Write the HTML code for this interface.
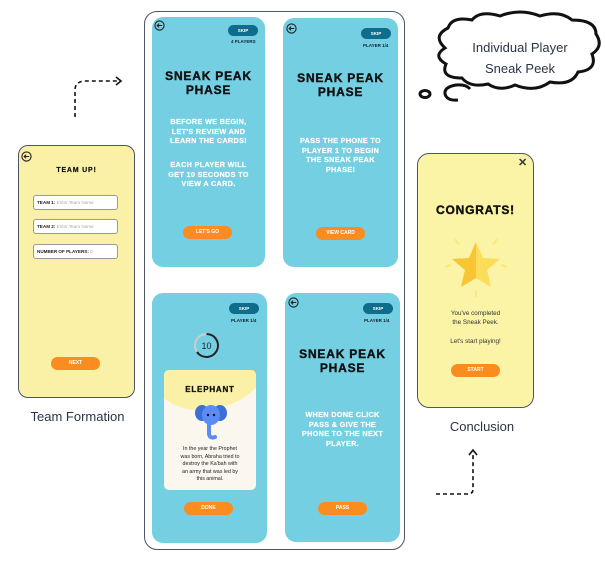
<!DOCTYPE html>
<html><head><meta charset="utf-8"><style>
*{margin:0;padding:0;box-sizing:border-box}
body{width:605px;height:565px;background:#fff;position:relative;overflow:hidden;font-family:"Liberation Sans",sans-serif}
.a{position:absolute}
.p{position:absolute;background:#74cfe2;border-radius:11px}
.t{position:absolute;left:0;right:0;text-align:center;font-weight:bold;color:#111;font-size:12px;line-height:14px;letter-spacing:0.8px;-webkit-text-stroke:0.4px #111}
.w{position:absolute;left:4px;right:4px;text-align:center;font-weight:bold;color:#fff;font-size:7.3px;line-height:9.6px;letter-spacing:0.3px;-webkit-text-stroke:0.2px #fff}
.skip{position:absolute;width:30px;height:11px;border-radius:6px;background:#0e6d8c;color:#fff;font-size:4.5px;font-weight:bold;text-align:center;line-height:11px}
.pl{position:absolute;font-size:4.5px;font-weight:bold;color:#123;}
.btn{position:absolute;height:13px;border-radius:7px;background:#fb8c1f;color:#fff;font-size:5px;font-weight:bold;text-align:center;line-height:13px}
.back{position:absolute;width:11px;height:11px}
.lbl{position:absolute;font-size:13px;color:#2b3445;text-align:center}
.inp{position:absolute;left:14px;width:85px;height:15px;background:#fff;border:1px solid #999;border-radius:3px;font-size:4.6px;line-height:13px;padding-left:3px;color:#aaa}
.inp b{color:#222}
</style></head><body>
<svg width="0" height="0" style="position:absolute"><symbol id="bk" viewBox="0 0 12 12"><circle cx="6" cy="6" r="5" fill="none" stroke="#222" stroke-width="1.2"/><path d="M9 6 H3.5 M5.5 4 L3.5 6 L5.5 8" fill="none" stroke="#222" stroke-width="1.2"/></symbol></svg>

<!-- Team up card -->
<div class="a" style="left:18px;top:145px;width:117px;height:253px;background:#fbf1a6;border:1.5px solid #4a5568;border-radius:10px;">
  <svg class="back" style="left:2px;top:5px"><use href="#bk"/></svg>
  <div class="t" style="top:18px;font-size:7px;-webkit-text-stroke:0.2px #111">TEAM UP!</div>
  <div class="inp" style="top:49px"><b>TEAM 1:</b> Enter Team Name</div>
  <div class="inp" style="top:73px"><b>TEAM 2:</b> Enter Team Name</div>
  <div class="inp" style="top:98px"><b>NUMBER OF PLAYERS:</b> 0</div>
  <div class="btn" style="left:32px;top:211px;width:49px">NEXT</div>
</div>
<div class="lbl" style="left:10px;top:409px;width:135px">Team Formation</div>

<svg class="a" style="left:0;top:0" width="605" height="565">
  <path d="M75 117 L75 90 Q75 82 84 81 L120 81" fill="none" stroke="#111" stroke-width="1.6" stroke-dasharray="4 3"/>
  <path d="M116 77 L121 81 L116 85" fill="none" stroke="#111" stroke-width="1.6"/>
  <path d="M436 494 L468 494 Q473 494 473 489 L473 452" fill="none" stroke="#111" stroke-width="1.6" stroke-dasharray="4 3"/>
  <path d="M469 455 L473 450 L477 455" fill="none" stroke="#111" stroke-width="1.6"/>
  <path d="M445 48 Q432 36 448 28 Q452 16 472 20 Q480 10 500 16 Q520 8 540 16 Q560 10 572 20 Q596 20 596 34 Q604 46 592 54 Q598 70 578 72 Q572 86 550 82 Q535 93 515 85 Q500 92 488 84 Q470 88 462 78 Q440 78 446 64 Q432 56 445 48 Z" fill="#fff" stroke="#111" stroke-width="3"/>
  <ellipse cx="425" cy="94" rx="5" ry="3.5" fill="none" stroke="#111" stroke-width="3"/>
  <path d="M470 89 Q466 84 456 85 Q444 87 445 94 Q447 101 458 100" fill="none" stroke="#111" stroke-width="3"/>
</svg>
<div class="a" style="left:450px;top:37px;width:140px;text-align:center;font-size:13px;line-height:21px;color:#2b3445">Individual Player<br>Sneak Peek</div>

<div class="a" style="left:144px;top:11px;width:261px;height:539px;border:1.5px solid #4a5568;border-radius:13px"></div>

<div class="p" style="left:152px;top:17px;width:113px;height:250px">
  <svg class="back" style="left:2px;top:3px"><use href="#bk"/></svg>
  <div class="skip" style="left:76px;top:8px">SKIP</div>
  <div class="pl" style="left:79px;top:22px">4 PLAYERS</div>
  <div class="t" style="top:52px">SNEAK PEAK<br>PHASE</div>
  <div class="w" style="top:100px">BEFORE WE BEGIN,<br>LET'S REVIEW AND<br>LEARN THE CARDS!</div>
  <div class="w" style="top:143px">EACH PLAYER WILL<br>GET 10 SECONDS TO<br>VIEW A CARD.</div>
  <div class="btn" style="left:31px;top:209px;width:49px">LET'S GO</div>
</div>

<div class="p" style="left:283px;top:18px;width:115px;height:249px">
  <svg class="back" style="left:3px;top:5px"><use href="#bk"/></svg>
  <div class="skip" style="left:78px;top:10px">SKIP</div>
  <div class="pl" style="left:80px;top:25px">PLAYER 1/4</div>
  <div class="t" style="top:53px">SNEAK PEAK<br>PHASE</div>
  <div class="w" style="top:118px">PASS THE PHONE TO<br>PLAYER 1 TO BEGIN<br>THE SNEAK PEAK<br>PHASE!</div>
  <div class="btn" style="left:33px;top:209px;width:49px">VIEW CARD</div>
</div>

<div class="p" style="left:152px;top:293px;width:115px;height:250px">
  <div class="skip" style="left:77px;top:10px">SKIP</div>
  <div class="pl" style="left:79px;top:25px">PLAYER 1/4</div>
  <svg class="a" style="left:41px;top:39px" width="27" height="27"><circle cx="13.5" cy="13.5" r="11.5" fill="none" stroke="#ccc" stroke-width="2"/><path d="M13.5 2 A11.5 11.5 0 1 1 4 20" fill="none" stroke="#222" stroke-width="2"/><text x="13.5" y="17" font-size="9" text-anchor="middle" fill="#222" font-family="Liberation Sans">10</text></svg>
  <div class="a" style="left:12px;top:77px;width:92px;height:120px;border-radius:5px;background:#fbf6ee;overflow:hidden">
    <div class="a" style="left:-10px;top:-40px;width:112px;height:80px;background:#fbf1a6;border-radius:0 0 60% 40%"></div>
    <div class="t" style="top:13px;font-size:8px;-webkit-text-stroke:0.3px #111">ELEPHANT</div>
    <svg class="a" style="left:31px;top:33px" width="32" height="37"><ellipse cx="7" cy="10" rx="7" ry="8" fill="#3d6ed6"/><ellipse cx="25" cy="10" rx="7" ry="8" fill="#3d6ed6"/><ellipse cx="16" cy="12" rx="9" ry="10" fill="#5a8cf5"/><path d="M14 20 L14 31 Q15 36 20 34" fill="none" stroke="#5a8cf5" stroke-width="4" stroke-linecap="round"/><circle cx="13" cy="12" r="1.2" fill="#111"/><circle cx="19" cy="12" r="1.2" fill="#111"/></svg>
    <div class="a" style="left:4px;right:4px;top:76px;text-align:center;font-size:5.3px;line-height:7.5px;color:#222">In the year the Prophet<br>was born, Abraha tried to<br>destroy the Ka'bah with<br>an army that was led by<br>this animal.</div>
  </div>
  <div class="btn" style="left:32px;top:209px;width:49px">DONE</div>
</div>

<div class="p" style="left:285px;top:293px;width:115px;height:249px">
  <svg class="back" style="left:3px;top:4px"><use href="#bk"/></svg>
  <div class="skip" style="left:78px;top:10px">SKIP</div>
  <div class="pl" style="left:79px;top:25px">PLAYER 1/4</div>
  <div class="t" style="top:54px">SNEAK PEAK<br>PHASE</div>
  <div class="w" style="top:117px">WHEN DONE CLICK<br>PASS &amp; GIVE THE<br>PHONE TO THE NEXT<br>PLAYER.</div>
  <div class="btn" style="left:33px;top:209px;width:49px">PASS</div>
</div>

<div class="a" style="left:417px;top:153px;width:117px;height:255px;background:#fbf4a6;border:1.5px solid #4a5568;border-radius:12px">
  <div class="a" style="left:100px;top:2px;font-size:11px;font-weight:bold;color:#333">✕</div>
  <div class="t" style="top:49px;font-size:12px">CONGRATS!</div>
  <svg class="a" style="left:26px;top:80px" width="64" height="64"><path d="M32 8 L39 24 L56 25 L43 36 L47 53 L32 44 L17 53 L21 36 L8 25 L25 24 Z" fill="#fddc5a"/><path d="M32 8 L25 24 L8 25 L21 36 L17 53 L32 44 Z" fill="#f9c532"/><g stroke="#fbe97a" stroke-width="2"><path d="M11 5 L15 11"/><path d="M53 5 L49 11"/><path d="M1 33 L7 31"/><path d="M63 33 L57 31"/><path d="M32 56 L32 63"/></g></svg>
  <div class="a" style="left:0;right:0;top:155px;text-align:center;font-size:6.3px;line-height:9px;color:#333">You've completed<br>the Sneak Peek.</div>
  <div class="a" style="left:0;right:0;top:184px;text-align:center;font-size:6.3px;color:#333">Let's start playing!</div>
  <div class="btn" style="left:33px;top:210px;width:49px">START</div>
</div>
<div class="lbl" style="left:417px;top:419px;width:130px">Conclusion</div>

</body></html>
